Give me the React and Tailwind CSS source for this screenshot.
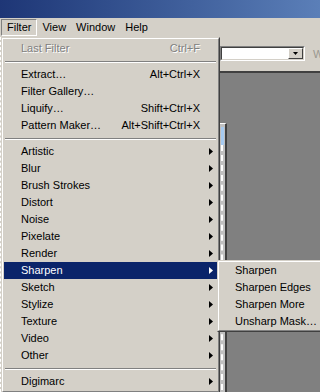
const items = [
  { type: 'item', label: 'Last Filter', shortcut: 'Ctrl+F', disabled: true },
  { type: 'sep' },
  { type: 'item', label: 'Extract…', shortcut: 'Alt+Ctrl+X' },
  { type: 'item', label: 'Filter Gallery…' },
  { type: 'item', label: 'Liquify…', shortcut: 'Shift+Ctrl+X' },
  { type: 'item', label: 'Pattern Maker…', shortcut: 'Alt+Shift+Ctrl+X' },
  { type: 'sep' },
  { type: 'item', label: 'Artistic', sub: true },
  { type: 'item', label: 'Blur', sub: true },
  { type: 'item', label: 'Brush Strokes', sub: true },
  { type: 'item', label: 'Distort', sub: true },
  { type: 'item', label: 'Noise', sub: true },
  { type: 'item', label: 'Pixelate', sub: true },
  { type: 'item', label: 'Render', sub: true },
  { type: 'item', label: 'Sharpen', sub: true, active: true },
  { type: 'item', label: 'Sketch', sub: true },
  { type: 'item', label: 'Stylize', sub: true },
  { type: 'item', label: 'Texture', sub: true },
  { type: 'item', label: 'Video', sub: true },
  { type: 'item', label: 'Other', sub: true },
  { type: 'sep' },
  { type: 'item', label: 'Digimarc', sub: true },
];

const subItems = ['Sharpen', 'Sharpen Edges', 'Sharpen More', 'Unsharp Mask…'];

const Arrow = ({ white }) => (
  <svg width="4" height="7" viewBox="0 0 4 7" className="absolute right-[4px] top-[5px]">
    <polygon points="0,0 4,3.5 0,7" fill={white ? '#ffffff' : '#000000'} />
  </svg>
);

const MenuRow = ({ item }) => {
  if (item.type === 'sep') {
    return (
      <div className="h-[9px] pt-[4px] px-px">
        <div className="h-px bg-[#808080]" />
        <div className="h-px bg-white" />
      </div>
    );
  }
  return (
    <div
      className={`relative h-[17px] flex items-center pl-[17px] pr-[17px] ${
        item.active ? 'bg-[#0a246a] text-white' : 'text-black'
      }`}
    >
      <span className={item.disabled ? 'text-[#808080] [text-shadow:1px_1px_0_#ffffff]' : ''}>{item.label}</span>
      {item.shortcut && (
        <span className={`ml-auto ${item.disabled ? 'text-[#808080] [text-shadow:1px_1px_0_#ffffff]' : ''}`}>
          {item.shortcut}
        </span>
      )}
      {item.sub && <Arrow white={item.active} />}
    </div>
  );
};

export default function App() {
  return (
    <div className="relative w-[320px] h-[392px] overflow-hidden bg-[#d4d0c8] font-['Liberation_Sans',Arial,sans-serif] text-[11px] leading-none select-none flex flex-col">
      {/* title bar */}
      <div className="h-[18px] shrink-0 bg-gradient-to-r from-[#1e3676] to-[#5b7fb8]" />

      {/* menu bar */}
      <div className="h-[19px] shrink-0 flex pt-px pl-px">
        <div className="h-[17px] px-[5px] flex items-center border border-t-[#808080] border-l-[#808080] border-b-white border-r-white">
          Filter
        </div>
        <div className="h-[17px] px-[5px] flex items-center">View</div>
        <div className="h-[17px] px-[5px] flex items-center">Window</div>
        <div className="h-[17px] px-[5px] flex items-center">Help</div>
      </div>

      {/* app body */}
      <div className="flex-1 flex">
        <div className="w-[220px] shrink-0 border-l border-dashed border-white" />
        <div className="flex-1 flex flex-col">
          <div className="h-[34px] shrink-0 flex items-start pt-[9px]">
            <div className="flex h-[15px] w-[85px] border border-t-[#808080] border-l-[#808080] border-b-white border-r-white">
              <div className="flex-1 flex border border-t-[#404040] border-l-[#404040] border-b-[#d4d0c8] border-r-[#d4d0c8]">
                <div className="flex-1 bg-white" />
                <div className="w-[15px] flex items-center justify-center bg-[#d4d0c8] border border-t-white border-l-white border-b-[#404040] border-r-[#404040]">
                  <svg width="5" height="3" viewBox="0 0 5 3">
                    <polygon points="0,0 5,0 2.5,3" fill="#000" />
                  </svg>
                </div>
              </div>
            </div>
            <span className="ml-[8px] mt-[3px] text-[#9a9890]">W</span>
          </div>
          <div className="relative flex-1 bg-[#808080] border-t-2 border-[#404040]">
            <div className="absolute left-0 top-[50px] bottom-0 w-[7px] bg-[#c0c0c0] border-t border-white border-r-2 border-r-[#404040] pl-px pt-[3px]">
              <div className="w-[3px] h-[18px] bg-[#a6caf0]" />
              <div className="w-[2px] h-full border-l-2 border-dashed border-white" />
            </div>
          </div>
        </div>
      </div>

      {/* Filter dropdown */}
      <div className="absolute left-px top-[37px] w-[219px] bg-[#d4d0c8] border border-t-[#d4d0c8] border-l-[#d4d0c8] border-b-[#404040] border-r-[#404040]">
        <div className="border border-t-white border-l-white border-b-[#808080] border-r-[#808080] p-px">
          {items.map((it, i) => (
            <MenuRow key={i} item={it} />
          ))}
        </div>
      </div>

      {/* Sharpen submenu */}
      <div className="absolute left-[217px] top-[260px] w-[120px] bg-[#d4d0c8] border border-t-[#d4d0c8] border-l-[#d4d0c8] border-b-[#404040] border-r-[#404040]">
        <div className="border border-t-white border-l-white border-b-[#808080] border-r-[#808080]">
          {subItems.map((s) => (
            <div key={s} className="h-[17px] flex items-center pl-[16px] whitespace-nowrap">
              {s}
            </div>
          ))}
        </div>
      </div>
    </div>
  );
}
